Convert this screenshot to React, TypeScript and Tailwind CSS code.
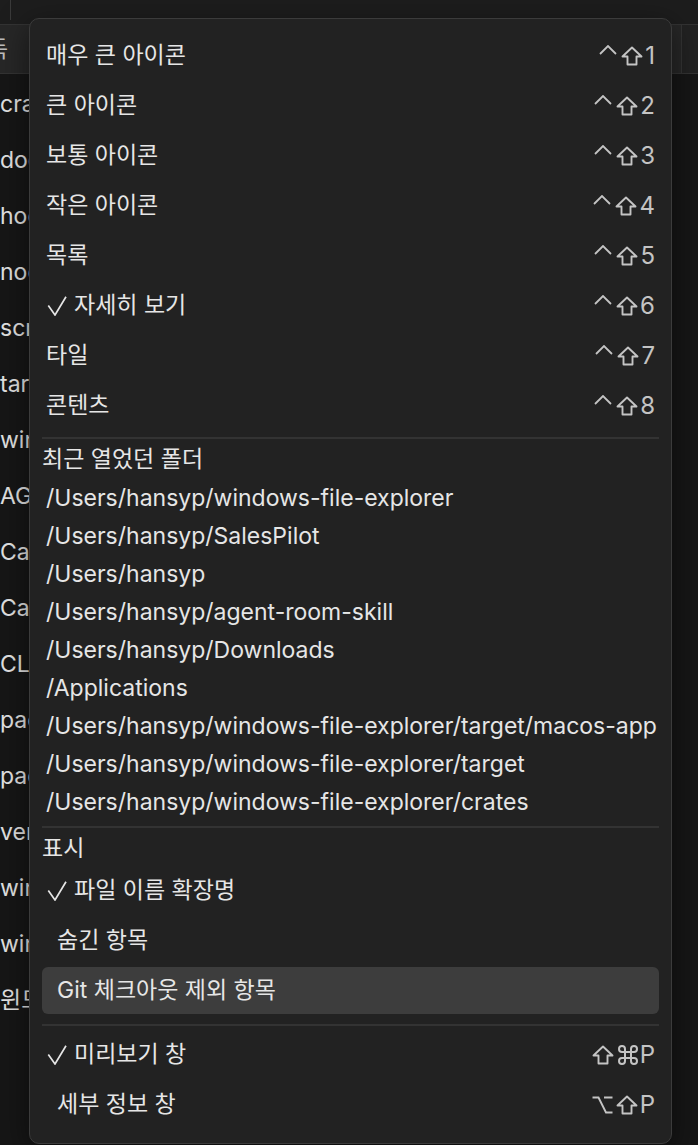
import React from 'react';

const files = [
  'crates',
  'docs',
  'hooks',
  'node_modules',
  'scripts',
  'target',
  'windows-app',
  'AGENTS.md',
  'Cargo.lock',
  'Cargo.toml',
  'CLAUDE.md',
  'package.json',
  'package-lock.json',
  'version.txt',
  'windows.rs',
  'windows.md',
  '윈도우 탐색기',
];

const views = [
  { label: '매우 큰 아이콘', n: '1' },
  { label: '큰 아이콘', n: '2' },
  { label: '보통 아이콘', n: '3' },
  { label: '작은 아이콘', n: '4' },
  { label: '목록', n: '5' },
  { label: '자세히 보기', n: '6', checked: true },
  { label: '타일', n: '7' },
  { label: '콘텐츠', n: '8' },
];

const recent = [
  '/Users/hansyp/windows-file-explorer',
  '/Users/hansyp/SalesPilot',
  '/Users/hansyp',
  '/Users/hansyp/agent-room-skill',
  '/Users/hansyp/Downloads',
  '/Applications',
  '/Users/hansyp/windows-file-explorer/target/macos-app',
  '/Users/hansyp/windows-file-explorer/target',
  '/Users/hansyp/windows-file-explorer/crates',
];

function Caret() {
  return (
    <svg width="18" height="10" viewBox="0 0 18 10" className="self-start mt-[1px]">
      <path d="M1 9 L9 1 L17 9" fill="none" stroke="currentColor" strokeWidth="1.8" />
    </svg>
  );
}

function Shift() {
  return (
    <svg width="22" height="20" viewBox="0 0 22 20">
      <path
        d="M11 1.5 L20.5 10.5 H15.5 V18.5 H6.5 V10.5 H1.5 Z"
        fill="none"
        stroke="currentColor"
        strokeWidth="1.9"
        strokeLinejoin="round"
      />
    </svg>
  );
}

function Cmd() {
  return (
    <svg width="20" height="20" viewBox="2 2 20 20">
      <path
        d="M15 6v12a3 3 0 1 0 3-3H6a3 3 0 1 0 3 3V6a3 3 0 1 0-3 3h12a3 3 0 1 0-3-3"
        fill="none"
        stroke="currentColor"
        strokeWidth="2"
      />
    </svg>
  );
}

function Opt() {
  return (
    <svg width="21" height="18" viewBox="0 0 21 18">
      <path d="M0.5 1.5 H6.5 L14 16.5 H20.5 M12 1.5 H20.5" fill="none" stroke="currentColor" strokeWidth="1.9" />
    </svg>
  );
}

function Check() {
  return (
    <svg width="20" height="20" viewBox="0 0 20 20" className="ml-[1px] shrink-0">
      <path d="M1.3 9.5 L8 19 L19 0.8" fill="none" stroke="currentColor" strokeWidth="1.7" />
    </svg>
  );
}

function Item({
  label,
  checked,
  indent,
  active,
  children,
}: {
  label: string;
  checked?: boolean;
  indent?: boolean;
  active?: boolean;
  children?: React.ReactNode;
}) {
  return (
    <div
      className={
        'flex h-[47px] items-center justify-between rounded-[6px] px-[4px] ' +
        (active ? 'bg-[#3d3d3d]' : '')
      }
    >
      <div className={'flex items-center ' + (indent ? 'pl-[11px]' : '')}>
        {checked && <Check />}
        <span className={checked ? 'ml-[7px]' : ''}>{label}</span>
      </div>
      {children && <div className="flex items-center text-[#c4c4c4]">{children}</div>}
    </div>
  );
}

export default function App() {
  return (
    <div className="relative h-[1145px] w-[698px] overflow-hidden bg-[#161616] font-['Inter','Noto_Sans_CJK_KR',sans-serif] text-[23px] text-[#e6e6e6]">
      {/* background window */}
      <div className="flex h-[24px] bg-[#1d1d1d]">
        <div className="h-[20px] w-[11px] border-r border-[#3a3a3a]" />
      </div>
      <div className="flex h-[50px] items-center justify-between border-y border-[#333333] bg-[#272727]">
        <div className="w-[29px] overflow-hidden">
          <span className="block w-[10px] overflow-hidden text-[#bdbdbd]">
            <span className="-ml-[13px] whitespace-nowrap">득</span>
          </span>
        </div>
        <div className="h-full w-[17px] border-l border-[#343434] bg-[#222222]" />
      </div>
      <div className="flex w-[29px] flex-col overflow-hidden pt-[2px]">
        {files.map((f) => (
          <div key={f} className="flex h-[56px] items-center whitespace-nowrap text-[#e2e2e2]">
            {f}
          </div>
        ))}
      </div>

      {/* dropdown menu */}
      <div className="absolute left-[29px] top-[18px] flex h-[1126px] w-[643px] flex-col rounded-[10px] border border-[#3b3b3b] bg-[#222222] px-[12px] pt-[13px] shadow-[0_8px_30px_rgba(0,0,0,0.5)]">
        <div className="flex flex-col gap-[3px]">
          {views.map((v) => (
            <Item key={v.n} label={v.label} checked={v.checked}>
              <Caret />
              <span className="ml-[4px]">
                <Shift />
              </span>
              <span className="ml-[2px] text-[24px] leading-none">{v.n}</span>
            </Item>
          ))}
        </div>

        <div className="mt-[8px] h-[2px] bg-[#333333]" />
        <div className="mt-[1px] flex h-[39px] items-center">최근 열었던 폴더</div>
        <div className="flex flex-col">
          {recent.map((p) => (
            <div key={p} className="flex h-[38px] items-center whitespace-nowrap px-[4px]">
              {p}
            </div>
          ))}
        </div>

        <div className="mt-[5px] h-[2px] bg-[#333333]" />
        <div className="mt-[1px] flex h-[38px] items-center">표시</div>
        <div className="flex flex-col gap-[3px]">
          <Item label="파일 이름 확장명" checked />
          <Item label="숨긴 항목" indent />
          <Item label="Git 체크아웃 제외 항목" indent active />
        </div>

        <div className="mt-[10px] h-[2px] bg-[#333333]" />
        <div className="mt-[5px] flex flex-col gap-[3px]">
          <Item label="미리보기 창" checked>
            <Shift />
            <span className="ml-[4px]">
              <Cmd />
            </span>
            <span className="ml-[2px] text-[24px] leading-none">P</span>
          </Item>
          <Item label="세부 정보 창" indent>
            <Opt />
            <span className="ml-[3px]">
              <Shift />
            </span>
            <span className="ml-[2px] text-[24px] leading-none">P</span>
          </Item>
        </div>
      </div>
    </div>
  );
}
